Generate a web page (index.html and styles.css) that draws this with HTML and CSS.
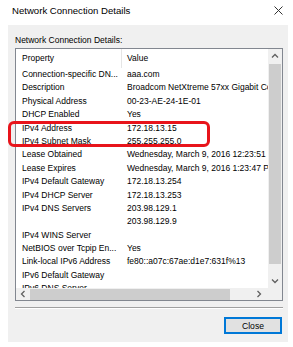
FILE: index.html
```html
<!DOCTYPE html>
<html lang="en">

<head>
    <meta charset="UTF-8">
    <title>Network Connection Details</title>
    <link rel="stylesheet" href="styles.css">
</head>

<body>
    <div class="titlebar">
        <span class="title">Network Connection Details</span>
        <svg class="close-x" width="9" height="9" viewBox="0 0 9 9">
            <path d="M0.5 0.5 L8.5 8.5 M8.5 0.5 L0.5 8.5" stroke="#333" stroke-width="1" fill="none" />
        </svg>
    </div>

    <div class="panel">
        <div class="caption">Network Connection Details:</div>

        <div class="listbox">
            <div class="list-main">
                <div class="list-view">
                    <div class="row head">
                        <span class="prop">Property</span>
                        <span class="val">Value</span>
                    </div>
                    <div class="row"><span class="prop">Connection-specific DN...</span><span class="val">aaa.com</span></div>
                    <div class="row"><span class="prop">Description</span><span class="val">Broadcom NetXtreme 57xx Gigabit Controller</span></div>
                    <div class="row"><span class="prop">Physical Address</span><span class="val">00-23-AE-24-1E-01</span></div>
                    <div class="row"><span class="prop">DHCP Enabled</span><span class="val">Yes</span></div>
                    <div class="row"><span class="prop">IPv4 Address</span><span class="val">172.18.13.15</span></div>
                    <div class="row"><span class="prop">IPv4 Subnet Mask</span><span class="val">255.255.255.0</span></div>
                    <div class="row"><span class="prop">Lease Obtained</span><span class="val">Wednesday, March 9, 2016 12:23:51 PM</span></div>
                    <div class="row"><span class="prop">Lease Expires</span><span class="val">Wednesday, March 9, 2016 1:23:47 PM</span></div>
                    <div class="row"><span class="prop">IPv4 Default Gateway</span><span class="val">172.18.13.254</span></div>
                    <div class="row"><span class="prop">IPv4 DHCP Server</span><span class="val">172.18.13.253</span></div>
                    <div class="row"><span class="prop">IPv4 DNS Servers</span><span class="val">203.98.129.1</span></div>
                    <div class="row"><span class="prop"></span><span class="val">203.98.129.9</span></div>
                    <div class="row"><span class="prop">IPv4 WINS Server</span><span class="val"></span></div>
                    <div class="row"><span class="prop">NetBIOS over Tcpip En...</span><span class="val">Yes</span></div>
                    <div class="row"><span class="prop">Link-local IPv6 Address</span><span class="val">fe80::a07c:67ae:d1e7:631f%13</span></div>
                    <div class="row"><span class="prop">IPv6 Default Gateway</span><span class="val"></span></div>
                    <div class="row"><span class="prop">IPv6 DNS Server</span><span class="val"></span></div>
                </div>
                <div class="vscroll">
                    <svg class="arrow" width="14" height="14" viewBox="0 0 14 14">
                        <path d="M4 8.5 L7 5.5 L10 8.5" stroke="#606060" stroke-width="1.3" fill="none" />
                    </svg>
                    <div class="vthumb"></div>
                    <svg class="arrow" width="14" height="14" viewBox="0 0 14 14">
                        <path d="M4 5.5 L7 8.5 L10 5.5" stroke="#606060" stroke-width="1.3" fill="none" />
                    </svg>
                </div>
            </div>
            <div class="hscroll">
                <svg class="arrow" width="14" height="12" viewBox="0 0 14 12">
                    <path d="M8.5 3 L5.5 6 L8.5 9" stroke="#606060" stroke-width="1.3" fill="none" />
                </svg>
                <div class="hthumb"></div>
                <svg class="arrow right" width="14" height="12" viewBox="0 0 14 12">
                    <path d="M5.5 3 L8.5 6 L5.5 9" stroke="#606060" stroke-width="1.3" fill="none" />
                </svg>
                <span class="corner"></span>
            </div>
            <div class="highlight"></div>
        </div>

        <div class="separator"></div>

        <div class="buttons">
            <button class="btn">Close</button>
        </div>
    </div>
</body>

</html>
```

FILE: styles.css
```css
/* base */
body {
    margin: 0;
    background: #fff;
    font-family: "Liberation Sans", Arial, sans-serif;
    font-size: 8.5px;
    color: #000;
}

.titlebar {  /* white title bar */
    height: 25px;
    display: flex;
    align-items: center;
    justify-content: space-between;
    padding: 0 10px 4px 12px;
    box-sizing: border-box;
}

.title {
    font-size: 9.6px;
}

.panel {  /* grey dialog body */
    background: #f0f0f0;
    margin: 0 5px 0 8px;
    padding: 10px 5px 0 7px;
    height: 317px;
    box-sizing: border-box;
}

.caption {
    height: 10px;
    line-height: 10px;
    margin-bottom: 3px;
}

.listbox {
    position: relative;
    border: 1px solid #828790;
    background: #fff;
    height: 253px;
    box-sizing: border-box;
    display: flex;
    flex-direction: column;
}

.list-main {
    flex: 1;
    display: flex;
    min-height: 0;
}

.list-view {
    flex: 1;
    min-width: 0;
    overflow: hidden;
}

.row {
    display: flex;
    height: 13.4px;
    line-height: 13.4px;
    white-space: nowrap;
}

.row.head {
    height: 19px;
    line-height: 19px;
}

.prop {
    width: 106px;
    flex: none;
    padding-left: 6px;
    box-sizing: border-box;
}

.head .prop {
    border-right: 1px solid #e5e5e5;
}

.val {
    padding-left: 5px;
}

.vscroll {  /* vertical scroll bar */
    width: 14px;
    flex: none;
    background: #f0f0f0;
    display: flex;
    flex-direction: column;
    align-items: center;
}

.vthumb {
    flex: 1;
    width: 12px;
    margin: 1px 0 10px;
    background: #cdcdcd;
}

.arrow {
    flex: none;
    display: block;
}

.hscroll {  /* horizontal scroll bar */
    height: 12px;
    flex: none;
    background: #f0f0f0;
    display: flex;
    align-items: center;
}

.hthumb {
    width: 200px;
    height: 11px;
    background: #cdcdcd;
}

.arrow.right {
    margin-left: auto;
    margin-right: 2px;
}

.corner {
    width: 14px;
    height: 12px;
    background: #f0f0f0;
}

.highlight {  /* red marker around IPv4 rows */
    position: absolute;
    left: -8px;
    top: 72px;
    width: 202px;
    height: 26px;
    box-sizing: border-box;
    border: 3px solid #e8141b;
    border-radius: 6px;
}

.separator {
    margin-top: 6px;
    border-top: 1px solid #a0a0a0;
    border-bottom: 1px solid #fff;
}

.buttons {
    display: flex;
    justify-content: flex-end;
    margin-top: 8px;
    padding-right: 1px;
}

.btn {
    width: 58px;
    height: 17px;
    padding: 0;
    font-family: inherit;
    font-size: 8.6px;
    color: #000;
    background: #e1e1e1;
    border: 1px solid #0078d7;
    box-shadow: inset 0 0 0 1px #0078d7;
}
```
